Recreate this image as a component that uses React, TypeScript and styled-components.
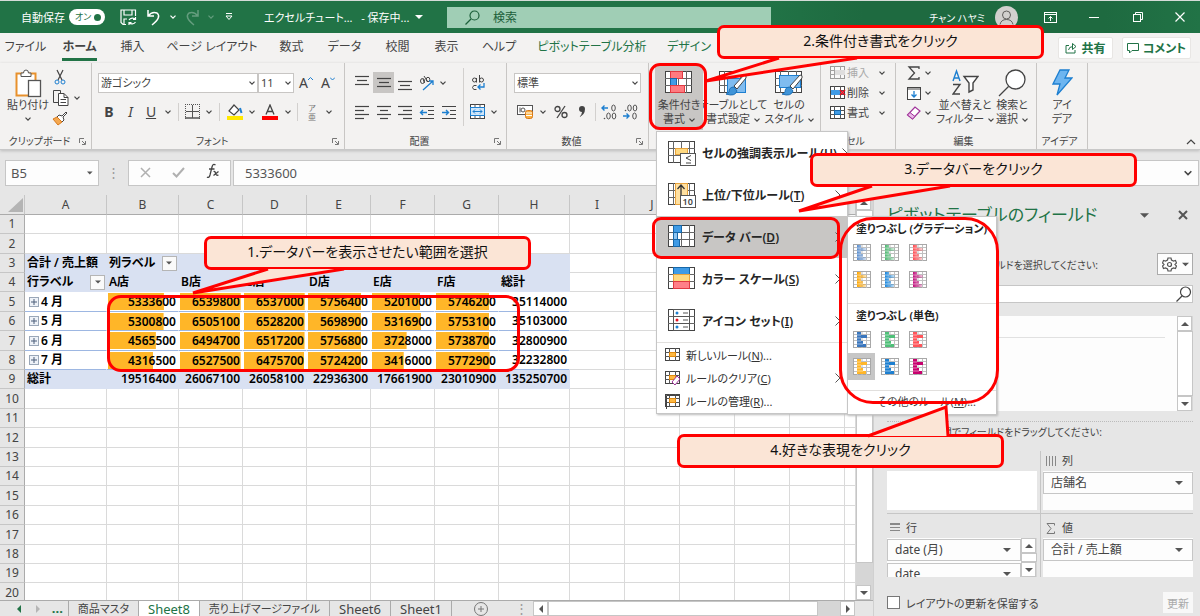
import React from 'react';
import styled, { createGlobalStyle, css } from 'styled-components';

const GlobalStyle = createGlobalStyle`
  * { box-sizing: border-box; }
  html, body { margin: 0; padding: 0; }
  body, button, input, select {
    font-family: "Noto Sans", "Noto Sans CJK JP", sans-serif;
    font-feature-settings: "palt";
    color: #444;
  }
  button { border: 0; padding: 0; background: none; }
`;

/* ---------- shared drawings ---------- */

type Dir = 'up' | 'down' | 'left' | 'right';

const Chevron = ({ size = 6, color = '#444' }: { size?: number; color?: string }) => (
  <svg width={size} height={size} viewBox="0 0 6 6" fill="none" stroke={color} strokeWidth="1.2">
    <path d="M.5 1.7 3 4.2 5.500 1.700" />
  </svg>
);

const Triangle = ({ dir = 'down', color = '#555', size = 8 }: { dir?: Dir; color?: string; size?: number }) => {
  const d = { up: 'M0 6 4 2 8 6Z', down: 'M0 2 4 6 8 2Z', left: 'M6 0 2 4 6 8Z', right: 'M2 0 6 4 2 8Z' }[dir];
  return (
    <svg width={size} height={size} viewBox="0 0 8 8">
      <path d={d} fill={color} />
    </svg>
  );
};

type CellFill = [number, number, number, number, string, string?];

/* Small worksheet drawing: 27x22 grid with coloured blocks */
const SheetIcon = ({ fills, children }: { fills: CellFill[]; children?: React.ReactNode }) => (
  <svg width="29" height="25" viewBox="0 0 29 25" fill="none">
    <rect x=".5" y=".5" width="26" height="21" fill="#fff" stroke="#444" />
    <path d="M5.500 0V22M13.500 0V22M21.500 0V22M0 7.500H27M0 14.500H27" stroke="#666" />
    {fills.map(([x, y, fw, fh, fill, stroke], i) => (
      <rect key={i} x={x} y={y} width={fw} height={fh} fill={fill} stroke={stroke} />
    ))}
    {children}
  </svg>
);

const MiniSheet = ({ children, faded }: { children?: React.ReactNode; faded?: boolean }) => (
  <svg width="16" height="16" viewBox="0 0 16 16" fill="none" opacity={faded ? 0.5 : 1}>
    <rect x=".5" y="1.500" width="14" height="12" fill="#fff" stroke="#444" />
    <path d="M4.500 1V14M10.500 1V14M0 5.500H15M0 9.500H15" stroke="#555" />
    {children}
  </svg>
);

const Brush = ({ x, y }: { x: number; y: number }) => (
  <g transform={`translate(${x} ${y})`}>
    <path d="M17 0 7 11 10 14 19 3Q20 0 17 0Z" fill="#fff" stroke="#444" />
    <path d="M7 12Q2 12 2 17Q1 19 -1 19Q8 22 10 16Z" fill="#3f94d8" stroke="#1d6fb5" />
  </g>
);

/* ---------- title bar ---------- */

const Window = styled.div`
  position: relative;
  display: flex;
  flex-direction: column;
  width: 100%;
  height: 100vh;
  overflow: hidden;
  background: #e6e6e6;
  border-top: 1px solid #d5dcd8;
`;

const TitleBar = styled.header`
  display: flex;
  align-items: center;
  flex: none;
  height: 32px;
  padding-left: 21px;
  background: linear-gradient(90deg, #217346 0 64%, #1e6a40 72% 92%, #217346);
  color: #fff;
  font-size: 12px;
`;

const AutoSave = styled.label`
  display: flex;
  align-items: center;
  gap: 4px;
  width: 97px;
  font-size: 11px;
  white-space: nowrap;
`;

const Toggle = styled.button`
  display: flex;
  align-items: center;
  justify-content: space-between;
  width: 36px;
  height: 16px;
  padding: 0 4px 0 6px;
  border-radius: 8px;
  background: #fff;
  color: #217346;
  font-size: 9px;
  line-height: 16px;
`;

const Dot = styled.span`
  width: 7px;
  height: 7px;
  border-radius: 50%;
  background: #217346;
`;

const TitleTool = styled.button<{ $w: number; $dim?: boolean }>`
  display: flex;
  align-items: center;
  justify-content: center;
  width: ${p => p.$w}px;
  height: 32px;
  opacity: ${p => (p.$dim ? 0.3 : 1)};
`;

const DocName = styled.div`
  display: flex;
  align-items: center;
  gap: 6px;
  width: 203px;
  padding-left: 20px;
  font-size: 11px;
  white-space: pre;
`;

const SearchBox = styled.label`
  display: flex;
  align-items: center;
  flex: 0 1 324px;
  height: 21px;
  padding-left: 18px;
  gap: 13px;
  background: #a0ceb5;
  svg { flex: none; }
  input {
    width: 100%;
    min-width: 0;
    border: 0;
    background: transparent;
    font-size: 12px;
    padding: 0;
    &::placeholder { color: #1c5f3a; opacity: 1; }
  }
`;

const User = styled.div`
  display: flex;
  align-items: center;
  gap: 10px;
  margin-left: auto;
  margin-right: 10px;
  font-size: 10px;
`;

/* ---------- tabs ---------- */

const TabRow = styled.nav`
  display: flex;
  align-items: center;
  flex: none;
  height: 30px;
  background: #f3f2f1;
  padding-right: 9px;
`;

const Tab = styled.button<{ $w: number; $on?: boolean; $green?: boolean }>`
  display: flex;
  justify-content: center;
  width: ${p => p.$w}px;
  font-size: 12px;
  line-height: 20px;
  white-space: nowrap;
  font-weight: ${p => (p.$on ? 700 : 400)};
  color: ${p => (p.$green ? '#217346' : '#444')};
  span {
    height: 24px;
    margin-top: 2px;
    border-bottom: 3px solid ${p => (p.$on ? '#217346' : 'transparent')};
  }
`;

const ShareButton = styled.button<{ $w: number }>`
  display: flex;
  align-items: center;
  justify-content: center;
  gap: 4px;
  width: ${p => p.$w}px;
  height: 22px;
  margin-left: 9px;
  border: 1px solid #e8e6e4;
  border-radius: 2px;
  background: #fff;
  color: #217346;
  font-size: 12px;
  font-weight: 700;
  white-space: nowrap;
`;

const Spacer = styled.div`
  flex: 1;
`;

/* ---------- ribbon ---------- */

const Ribbon = styled.section`
  position: relative;
  display: flex;
  flex: none;
  height: 87px;
  background: #f3f2f1;
  border-bottom: 1px solid #c8c8c8;
  box-shadow: 0 1px 3px #bbb;
  font-size: 11px;
`;

const Group = styled.div<{ $w: number }>`
  display: flex;
  flex-direction: column;
  flex: none;
  width: ${p => p.$w}px;
  border-right: 1px solid #c8c6c4;
`;

const GroupBody = styled.div<{ $pad?: number }>`
  display: flex;
  flex: 1;
  padding-left: ${p => p.$pad ?? 0}px;
`;

const GroupLabel = styled.div`
  display: flex;
  align-items: center;
  justify-content: center;
  height: 15px;
  font-size: 10px;
  line-height: 15px;
  white-space: nowrap;
  padding-right: 5px;
  span { flex: 1; text-align: center; }
`;

const Column = styled.div<{ $w?: number; $gap?: number; $top?: number }>`
  display: flex;
  flex-direction: column;
  width: ${p => (p.$w ? `${p.$w}px` : 'auto')};
  gap: ${p => p.$gap ?? 8}px;
  padding-top: ${p => p.$top ?? 9}px;
`;

const ToolRow = styled.div`
  display: flex;
  align-items: center;
  height: 21px;
`;

const Tool = styled.button<{ $w: number; $on?: boolean }>`
  display: flex;
  align-items: center;
  justify-content: center;
  flex: none;
  width: ${p => p.$w}px;
  height: 21px;
  font-size: 14px;
  line-height: 20px;
  background: ${p => (p.$on ? '#c8c6c4' : 'transparent')};
`;

const Ruby = styled.span`
  width: 9px;
  font-size: 8px;
  line-height: 9px;
  color: #777;
`;

const Divider = styled.span<{ $h?: number; $m?: number }>`
  flex: none;
  width: 1px;
  height: ${p => p.$h ?? 18}px;
  margin: 0 ${p => p.$m ?? 3}px;
  background: #d2d0ce;
`;

const Picker = styled.div<{ $w: number }>`
  display: grid;
  align-items: center;
  flex: none;
  width: ${p => p.$w}px;
  select {
    grid-area: 1 / 1;
    appearance: none;
    width: 100%;
    height: 20px;
    padding: 0 2px;
    border: 1px solid #c8c6c4;
    border-radius: 0;
    background: #fff;
    font-size: 11px;
    line-height: 18px;
  }
  svg {
    grid-area: 1 / 1;
    justify-self: end;
    margin-right: 3px;
    pointer-events: none;
  }
`;

const BigButton = styled.button<{ $w: number; $on?: boolean }>`
  display: flex;
  flex-direction: column;
  align-items: center;
  flex: none;
  width: ${p => p.$w}px;
  height: 64px;
  margin-top: 3px;
  padding-top: 3px;
  font-size: 11px;
  line-height: 14px;
  white-space: nowrap;
  background: ${p => (p.$on ? '#c8c6c4' : 'transparent')};
  > svg:first-child { flex: none; height: 29px; }
  > svg:last-child { margin-top: 4px; }
  span svg { margin-left: 4px; vertical-align: middle; }
`;

const SmallButton = styled.button<{ $faded?: boolean }>`
  display: flex;
  align-items: center;
  gap: 1px;
  height: 20px;
  font-size: 11px;
  line-height: 20px;
  white-space: nowrap;
  color: ${p => (p.$faded ? '#aaa' : '#444')};
  > span + svg { margin-left: 9px; }
`;

const MenuAnchor = styled.div`
  position: relative;
  z-index: 5;
  margin-left: 6px;
`;

/* ---------- menus ---------- */

const popup = css`
  background: #fff;
  border: 1px solid #c6c6c6;
  box-shadow: 1px 1px 2px #bbb;
`;

const Menu = styled.ul`
  ${popup}
  position: absolute;
  left: 1px;
  top: 68px;
  width: 192px;
  margin: 0;
  padding: 0 0 1px;
  list-style: none;
`;

const MenuItem = styled.li<{ $on?: boolean }>`
  position: relative;
  background: ${p => (p.$on ? '#c8c6c4' : 'transparent')};
  > button {
    display: flex;
    align-items: center;
    gap: 5px;
    width: 100%;
    height: 42px;
    padding: 0 6px 0 11px;
    font-size: 12px;
    font-weight: 600;
    color: #262626;
    white-space: nowrap;
    svg { flex: none; }
    svg:last-child { margin-left: auto; }
  }
`;

const SmallItem = styled.li`
  > button {
    display: flex;
    align-items: center;
    gap: 5px;
    width: 100%;
    height: 23px;
    padding: 0 6px 0 8px;
    font-size: 11px;
    color: #333;
    white-space: nowrap;
    svg { flex: none; }
    svg:nth-child(3) { margin-left: auto; }
  }
`;

const Rule = styled.hr`
  height: 1px;
  margin: 0;
  border: 0;
  background: #e1dfdd;
`;

const Submenu = styled.div`
  ${popup}
  position: absolute;
  left: 190px;
  top: 0;
  width: 150px;
  height: 199px;
`;

const SubTitle = styled.h3`
  margin: 0;
  padding: 2px 0 0 8px;
  font-size: 11px;
  font-weight: 600;
  line-height: 20px;
  color: #222;
  white-space: nowrap;
`;

const Swatches = styled.div`
  display: grid;
  grid-template-columns: repeat(3, 28px);
  grid-auto-rows: 27px;
  padding-bottom: 10px;
`;

const Swatch = styled.button<{ $on?: boolean }>`
  display: flex;
  align-items: center;
  justify-content: center;
  width: 27px;
  height: 27px;
  background: ${p => (p.$on ? '#c6c6c6' : 'transparent')};
`;

const MoreRules = styled.button`
  width: 100%;
  padding-left: 29px;
  font-size: 11px;
  line-height: 22px;
  text-align: left;
  white-space: nowrap;
`;

/* ---------- formula bar ---------- */

const FormulaBar = styled.div`
  display: flex;
  flex: none;
  height: 45px;
  padding: 10px 1px 9px 5px;
`;

const NameBox = styled.label`
  display: flex;
  align-items: center;
  width: 94px;
  padding: 0 5px;
  border: 1px solid #c6c6c6;
  background: #fdfdfd;
  input { width: 100%; min-width: 0; border: 0; padding: 0; background: none; font-size: 13px; color: #555; }
`;

const Grip = styled.span<{ $w?: number }>`
  width: ${p => p.$w ?? 29}px;
  color: #999;
  font-size: 13px;
  line-height: ${p => (p.$w ? 15 : 24)}px;
  text-align: center;
`;

const FormulaTools = styled.div`
  display: flex;
  align-items: center;
  justify-content: space-around;
  width: 103px;
  margin-right: 2px;
  border: 1px solid #c6c6c6;
  background: #fdfdfd;
`;

const FormulaInput = styled.label`
  display: flex;
  align-items: center;
  flex: 1;
  padding: 0 6px 0 11px;
  border: 1px solid #c6c6c6;
  background: #fdfdfd;
  input { flex: 1; min-width: 0; border: 0; padding: 0; background: none; font-size: 13px; color: #555; }
`;

/* ---------- worksheet ---------- */

const Main = styled.main`
  display: flex;
  flex: 1;
  min-height: 0;
`;

const SheetSide = styled.div`
  display: flex;
  flex-direction: column;
  flex: 1;
  min-width: 0;
  border-right: 1px solid #d0d0d0;
`;

const SheetBody = styled.div`
  display: flex;
  flex: 1;
  min-height: 0;
`;

const SheetViewport = styled.div`
  flex: 1;
  min-width: 0;
  overflow: hidden;
  background: #fff;
`;

const Grid = styled.table`
  table-layout: fixed;
  width: 100%;
  border-spacing: 0;
  font-size: 12px;
  color: #000;
  td, th { padding: 0; line-height: 18px; white-space: nowrap; overflow: hidden; }
  thead th {
    height: 20px;
    border-right: 1px solid #c6c6c6;
    border-bottom: 1px solid #ababab;
    background: #e6e6e6;
    color: #444;
    font-size: 12px;
    font-weight: 400;
    text-align: center;
  }
  thead svg { display: block; }
  tbody th {
    border-right: 1px solid #ababab;
    border-bottom: 1px solid #c6c6c6;
    background: #e6e6e6;
    color: #444;
    font-size: 12px;
    font-weight: 400;
    text-align: center;
  }
  tbody tr { height: 19px; }
  tbody tr:nth-child(5n), tbody tr:nth-child(5n + 2) { height: 20px; }
`;

const Cell = styled.td<{ $head?: boolean; $pivot?: boolean }>`
  border-right: 1px solid ${p => (p.$head ? '#d9e1f2' : p.$pivot ? '#fff' : '#dadada')};
  border-bottom: 1px solid ${p => (p.$head ? '#d9e1f2' : p.$pivot ? '#9db7e2' : '#dadada')};
  background: ${p => (p.$head ? '#d9e1f2' : '#fff')};
  font-weight: 600;
`;

const CellText = styled.div<{ $right?: boolean }>`
  display: flex;
  align-items: center;
  justify-content: ${p => (p.$right ? 'flex-end' : 'flex-start')};
  gap: 6px;
  height: 18px;
  padding: 0 ${p => (p.$right ? 2 : 1)}px 0 2px;
`;

const RowName = styled.div`
  display: flex;
  align-items: center;
  gap: 2px;
  height: 18px;
  padding-left: 4px;
`;

const BarCell = styled.div`
  height: 17px;
  margin: 0 0 0 1px;
  padding-right: 2px;
  line-height: 17px;
  text-align: right;
  background-image: linear-gradient(#ffb628, #ffb628);
  background-repeat: no-repeat;
`;

const FilterButton = styled.button<{ $end?: boolean }>`
  display: flex;
  align-items: center;
  justify-content: center;
  flex: none;
  width: 15px;
  height: 15px;
  margin-left: ${p => (p.$end ? 'auto' : '0')};
  border: 1px solid #b5b5b5;
  background: #fafafa;
`;

const VScroll = styled.div<{ $w: number }>`
  display: flex;
  flex-direction: column;
  flex: none;
  width: ${p => p.$w}px;
  background: #d6d6d6;
`;

const ScrollButton = styled.button`
  display: flex;
  align-items: center;
  justify-content: center;
  flex: none;
  width: 15px;
  height: 15px;
  border: 1px solid #c6c6c6;
  background: #fff;
`;

const Thumb = styled.div`
  flex: 1;
  background: #fff;
  border: 1px solid #c6c6c6;
`;

const Track = styled.div`
  flex: 0 0 22px;
`;

const TabBar = styled.div`
  display: flex;
  flex: none;
  height: 16px;
  border-top: 1px solid #ababab;
  font-size: 13px;
`;

const SheetNav = styled.div`
  display: flex;
  align-items: center;
  justify-content: space-around;
  width: 69px;
  padding-left: 10px;
  border-right: 1px solid #ababab;
  color: #217346;
  font-weight: 700;
  line-height: 15px;
`;

const SheetTab = styled.button<{ $w: number; $on?: boolean }>`
  flex: none;
  width: ${p => p.$w}px;
  border-right: 1px solid #ababab;
  background: ${p => (p.$on ? '#fff' : 'transparent')};
  color: ${p => (p.$on ? '#217346' : '#444')};
  font-size: 13px;
  line-height: 14px;
  white-space: nowrap;
  &:lang(ja) { font-size: 11px; }
`;

const AddSheet = styled.button`
  display: flex;
  align-items: center;
  justify-content: center;
  width: 58px;
  height: 15px;
`;

const HScroll = styled.div`
  display: flex;
  flex: 1;
  margin-right: 18px;
  background: #d6d6d6;
`;

/* ---------- field pane ---------- */

const Pane = styled.aside`
  display: flex;
  flex-direction: column;
  flex: none;
  width: 326px;
  padding: 0 7px 3px 13px;
  font-size: 11px;
`;

const PaneHead = styled.div`
  display: flex;
  align-items: center;
  height: 40px;
  h2 { flex: 1; margin: 0; font-size: 17px; font-weight: 400; line-height: 40px; color: #217346; white-space: nowrap; }
  button:last-child { margin: 0 5px 0 29px; }
`;

const PaneNote = styled.div`
  display: flex;
  align-items: center;
  justify-content: space-between;
  height: 22px;
  margin-top: 18px;
  font-size: 10px;
`;

const GearButton = styled.button`
  display: flex;
  align-items: center;
  justify-content: center;
  gap: 5px;
  width: 36px;
  height: 22px;
  border: 1px solid #ababab;
  background: #fdfdfd;
`;

const FieldSearch = styled.label`
  display: flex;
  align-items: center;
  height: 18px;
  margin-top: 10px;
  border: 1px solid #c6c6c6;
  background: #fff;
  input { flex: 1; min-width: 0; height: 14px; border: 0; background: none; padding: 0 4px; }
`;

const FieldList = styled.div`
  display: flex;
  flex: 1;
  min-height: 0;
  margin-top: 13px;
  background: #fdfdfd;
`;

const FieldRows = styled.div`
  flex: 1;
  hr { height: 1px; margin: 21px 12px 0 0; border: 0; background: #e1e1e1; }
`;

const AreaNote = styled.p`
  margin: 10px 0 8px;
  border-top: 1px dotted #bbb;
  font-size: 10px;
  line-height: 21px;
`;

const Areas = styled.div`
  display: grid;
  grid-template-columns: 1fr 1fr;
`;

const Area = styled.section<{ $right?: boolean; $top?: boolean }>`
  height: 63px;
  padding: ${p => (p.$top ? 0 : 4)}px ${p => (p.$right ? 0 : 3)}px 0 ${p => (p.$right ? 2 : 0)}px;
  border-left: ${p => (p.$right ? '1px solid #c6c6c6' : '0')};
  border-bottom: ${p => (p.$top ? '1px solid #c6c6c6' : '0')};
  h4 { display: flex; align-items: center; gap: 6px; height: 20px; margin: 0; padding-left: 3px; font-size: 11px; font-weight: 400; line-height: 20px; }
`;

const DropZone = styled.div`
  display: flex;
  height: 39px;
  overflow: hidden;
  background: #fff;
`;

const Chips = styled.div`
  display: flex;
  flex-direction: column;
  flex: 1;
  gap: 2px;
  padding-top: 1px;
  background: #fdfdfd;
`;

const Chip = styled.button`
  display: flex;
  align-items: center;
  justify-content: space-between;
  flex: none;
  height: 22px;
  padding: 0 9px 0 7px;
  border: 1px solid #c6c6c6;
  background: #fdfdfd;
  font-size: 12px;
  line-height: 20px;
`;

const PaneFoot = styled.div`
  display: flex;
  align-items: center;
  justify-content: space-between;
  height: 21px;
  margin-top: 15px;
  label { display: flex; align-items: center; gap: 6px; }
  input { appearance: none; width: 13px; height: 13px; margin: 0; border: 1px solid #777; background: #fff; }
  button { width: 30px; height: 21px; background: #f8f8f8; color: #aaa; font-size: 11px; }
`;

/* ---------- tutorial marks ---------- */

const Frame = styled.div<{ $x: number; $y: number; $w: number; $h: number; $r: number }>`
  position: absolute;
  z-index: 8;
  left: ${p => p.$x}px;
  top: ${p => p.$y}px;
  width: ${p => p.$w}px;
  height: ${p => p.$h}px;
  border: 3px solid #f00;
  border-radius: ${p => p.$r}px;
  pointer-events: none;
`;

const CalloutBox = styled.div<{ $x: number; $y: number }>`
  position: absolute;
  z-index: 9;
  left: ${p => p.$x}px;
  top: ${p => p.$y}px;
  width: 327px;
  height: 34px;
  border: 3px solid #f00;
  border-radius: 7px;
  background: #fbe5d6;
  color: #111;
  font-size: 14px;
  line-height: 26px;
  text-align: center;
  svg { position: absolute; left: -3px; top: -3px; overflow: visible; }
`;

/* tail: base point, tip, base point, measured from the corner of the box */
const Callout = ({ x, y, tail, children }: { x: number; y: number; tail: [number, number][]; children: React.ReactNode }) => {
  const pts = tail.map(p => p.join(',')).join(' ');
  return (
    <CalloutBox $x={x} $y={y}>
      <svg width="327" height="34">
        <polygon points={pts} fill="#fbe5d6" />
        <polyline points={pts} fill="none" stroke="#f00" strokeWidth="3" />
      </svg>
      {children}
    </CalloutBox>
  );
};

/* ---------- data ---------- */

const COLUMNS = 'ABCDEFGHIJKLM'.split('');
const WIDTHS = [82, 72, 64, 64, 64, 64, 64, 71];
const SALES: Record<number, [string, number[]]> = {
  5: ['4 月', [5333600, 6539800, 6537000, 5756400, 5201000, 5746200, 35114000]],
  6: ['5 月', [5300800, 6505100, 6528200, 5698900, 5316900, 5753100, 35103000]],
  7: ['6 月', [4565500, 6494700, 6517200, 5756800, 3728000, 5738700, 32800900]],
  8: ['7 月', [4316500, 6527500, 6475700, 5724200, 3416000, 5772900, 32232800]],
};
const TOTALS = [19516400, 26067100, 26058100, 22936300, 17661900, 23010900, 135250700];
const STORES = ['A店', 'B店', 'C店', 'D店', 'E店', 'F店', '総計'];
const MAX = 6539800;

const Expand = () => (
  <svg width="10" height="10" viewBox="0 0 10 10" fill="none">
    <rect x=".5" y=".5" width="9" height="9" fill="#eef2f8" stroke="#9aa7b8" />
    <path d="M2 5H8M5 2V8" stroke="#4a5d78" />
  </svg>
);

const cellContent = (row: number, col: number): React.ReactNode => {
  if (row === 3 && col === 0) return <CellText>合計 / 売上額</CellText>;
  if (row === 3 && col === 1)
    return <CellText>列ラベル<FilterButton aria-label="列の絞り込み"><Triangle size={6} /></FilterButton></CellText>;
  if (row === 4 && col === 0)
    return <CellText>行ラベル<FilterButton $end aria-label="行の絞り込み"><Triangle size={6} /></FilterButton></CellText>;
  if (row === 4 && col > 0) return <CellText>{STORES[col - 1]}</CellText>;
  if (row === 9) return col === 0 ? <CellText>総計</CellText> : <CellText $right>{TOTALS[col - 1]}</CellText>;
  const sales = SALES[row];
  if (!sales) return null;
  if (col === 0) return <RowName><Expand />{sales[0]}</RowName>;
  const value = sales[1][col - 1];
  if (col === 7) return <CellText $right>{value}</CellText>;
  return <BarCell style={{ backgroundSize: `${(value / MAX) * 98}% 100%` }}>{value}</BarCell>;
};

const Worksheet = () => (
  <Grid>
    <colgroup>
      <col style={{ width: 25 }} />
      {COLUMNS.map((c, i) => <col key={c} style={{ width: WIDTHS[i] ?? 55 }} />)}
      <col />
    </colgroup>
    <thead>
      <tr>
        <th aria-label="すべて選択">
          <svg width="25" height="18" viewBox="0 0 25 18"><path d="M23 2V16H8Z" fill="#b4b4b4" /></svg>
        </th>
        {COLUMNS.map(c => <th key={c}>{c}</th>)}
        <th />
      </tr>
    </thead>
    <tbody>
      {Array.from({ length: 20 }, (_, i) => i + 1).map(row => (
        <tr key={row}>
          <th>{row}</th>
          {COLUMNS.map((c, col) => (
            <Cell
              key={c}
              $head={col < 8 && (row === 3 || row === 4 || row === 9)}
              $pivot={col < 8 && row >= 5 && row <= 8}
            >
              {col < 8 ? cellContent(row, col) : null}
            </Cell>
          ))}
          <Cell />
        </tr>
      ))}
    </tbody>
  </Grid>
);

/* ---------- ribbon icons ---------- */

const Lines = ({ rows, top = 4 }: { rows: [number, number][]; top?: number }) => (
  <svg width="16" height="16" viewBox="0 0 16 16" stroke="#444" strokeWidth="1.200">
    {rows.map(([a, b], i) => <path key={i} d={`M${a} ${top + i * 4 - 1.5}H${b}`} />)}
  </svg>
);

const Indent = ({ out }: { out?: boolean }) => (
  <svg width="16" height="16" viewBox="0 0 16 16" fill="none" stroke="#444" strokeWidth="1.200">
    <path d="M1 2.500H15M9 6.500H15M9 10.500H15M1 14.500H15" />
    <path stroke="#1d7fd0" strokeWidth="1.400" d={out ? 'M8 8.500H1.500M4 6 1.500 8.500 4 11' : 'M1 8.500H7.500M5 6 7.500 8.500 5 11'} />
  </svg>
);

const DialogMark = () => (
  <svg width="7" height="7" viewBox="0 0 7 7" fill="none" stroke="#777">
    <path d="M.5 5V.5H5M3 3 6 6M6.500 3V6.500H3" />
  </svg>
);

const Decimal = ({ more }: { more?: boolean }) => (
  <svg width="17" height="16" viewBox="0 0 17 16" fill="none">
    <path d={more ? 'M7 4H1M3.500 1.500 1 4 3.500 6.500' : 'M1 12H7M4.500 9.500 7 12 4.500 14.500'} stroke="#1d7fd0" strokeWidth="1.400" />
    <ellipse cx="12.500" cy={more ? 4 : 12} rx="1.800" ry="3" stroke="#555" />
    {[7.5, 13].map(cx => <ellipse key={cx} cx={cx} cy={more ? 12 : 4} rx="1.800" ry="3" stroke="#555" />)}
    <circle cx="3.500" cy={more ? 14.500 : 6.500} r=".8" fill="#555" />
  </svg>
);

const GRAD = ['#5b8fd0', '#4fb873', '#ff4d52', '#ffa600', '#1a86dc', '#c2107c'];
const SOLID = ['#3a76bd', '#4fbf78', '#ff555a', '#ffb628', '#1d7fd0', '#c8006e'];

const BarSwatch = ({ color, solid }: { color: string; solid?: boolean }) => (
  <svg width="18" height="18" viewBox="0 0 18 18" fill="none">
    <defs>
      <linearGradient id={`g${color.slice(1)}`}>
        <stop offset="0" stopColor={color} />
        <stop offset="1" stopColor={color} stopOpacity=".2" />
      </linearGradient>
    </defs>
    <rect x=".5" y=".5" width="17" height="16" fill="#fff" stroke="#a8a8a8" />
    <path d="M4.500 1V17M9 1V17M13.500 1V17M1 3.500H17M1 6.500H17M1 9.500H17M1 13.500H17" stroke="#c0c0c0" />
    <path
      d="M4 1H8V4H14V7H8V10H10V13H13V16H4Z"
      fill={solid ? color : `url(#g${color.slice(1)})`}
    />
    <path d="M4 4H8M4 7H8M4 10H8M4 13H10" stroke="#fff" strokeWidth=".5" />
  </svg>
);

const Arrow = () => (
  <svg width="6" height="10" viewBox="0 0 6 10" fill="none" stroke="#555">
    <path d="M.5 .5 5 5 .5 9.500" />
  </svg>
);

const ConditionalMenu = () => (
  <Menu>
    <MenuItem>
      <button>
        <SheetIcon fills={[[7.5, 7.5, 12, 6, '#ffd980', '#e8a33d']]}>
          <rect x="12.500" y="12.500" width="15" height="12" fill="#fff" stroke="#555" />
          <path d="M23 14.500 18 17 23 19.500M18 22H23" stroke="#444" />
        </SheetIcon>
        <span>セルの強調表示ルール(<u>H</u>)</span><Arrow />
      </button>
    </MenuItem>
    <MenuItem>
      <button>
        <SheetIcon fills={[[7.5, 0.5, 12, 21, '#ffe0a0', '#e8a33d']]}>
          <path d="M13 12V2M9.500 6 13 2 16.500 6" stroke="#333" strokeWidth="1.300" />
          <rect x="12.500" y="12.500" width="15" height="12" fill="#fff" stroke="#555" />
          <text x="14.500" y="22" fontSize="9" fill="#444">10</text>
        </SheetIcon>
        <span>上位/下位ルール(<u>T</u>)</span><Arrow />
      </button>
    </MenuItem>
    <MenuItem $on>
      <button>
        <SheetIcon fills={[[5.5, 0.5, 8, 7, '#3f9be6', '#1667a8'], [5.5, 7.5, 4, 7, '#8cc4f2', '#1667a8'], [5.5, 14.5, 6, 7, '#3f9be6', '#1667a8']]} />
        <span>データ バー(<u>D</u>)</span><Arrow />
      </button>
      <Submenu>
        <SubTitle>塗りつぶし (グラデーション)</SubTitle>
        <Swatches>
          {GRAD.map(c => <Swatch key={c} aria-label="グラデーション"><BarSwatch color={c} /></Swatch>)}
        </Swatches>
        <Rule />
        <SubTitle>塗りつぶし (単色)</SubTitle>
        <Swatches>
          {SOLID.map((c, i) => <Swatch key={c} $on={i === 3} aria-label="単色"><BarSwatch color={c} solid /></Swatch>)}
        </Swatches>
        <Rule />
        <MoreRules>その他のルール(<u>M</u>)...</MoreRules>
      </Submenu>
    </MenuItem>
    <MenuItem>
      <button>
        <SheetIcon fills={[[5.5, 0.5, 16, 7, '#3f9be6', '#1667a8'], [5.5, 7.5, 16, 7, '#ffd980', '#e8a33d'], [5.5, 14.5, 16, 7, '#ff8088', '#e03a42']]} />
        <span>カラー スケール(<u>S</u>)</span><Arrow />
      </button>
    </MenuItem>
    <MenuItem>
      <button>
        <SheetIcon fills={[[5.5, 0.5, 16, 7, '#fff', '#555'], [5.5, 7.5, 16, 7, '#fff', '#555'], [5.5, 14.5, 16, 7, '#fff', '#555']]}>
          <path d="M15 4H20M15 11H20M15 18H20" stroke="#555" />
          <circle cx="9" cy="4" r="1.500" fill="#1d7fd0" />
          <circle cx="9" cy="11" r="1.500" fill="#e81123" />
          <circle cx="9" cy="18" r="1.500" fill="#1d7fd0" />
        </SheetIcon>
        <span>アイコン セット(<u>I</u>)</span><Arrow />
      </button>
    </MenuItem>
    <Rule />
    <SmallItem>
      <button>
        <MiniSheet><rect x="4.500" y="5.500" width="6" height="4" fill="#ffb840" stroke="#e08a10" /></MiniSheet>
        <span>新しいルール(<u>N</u>)...</span>
      </button>
    </SmallItem>
    <SmallItem>
      <button>
        <MiniSheet>
          <rect x="4.500" y="5.500" width="6" height="4" fill="#ffb840" stroke="#e08a10" />
          <path d="M7 12 12 6 15 9 10 15Z" fill="#fff" stroke="#a0329a" />
        </MiniSheet>
        <span>ルールのクリア(<u>C</u>)</span><Arrow />
      </button>
    </SmallItem>
    <SmallItem>
      <button>
        <MiniSheet>
          <rect x="4.500" y="5.500" width="6" height="4" fill="#ffb840" stroke="#e08a10" />
          <path d="M1.500 16V2.500H15" stroke="#444" />
        </MiniSheet>
        <span>ルールの管理(<u>R</u>)...</span>
      </button>
    </SmallItem>
  </Menu>
);

const RibbonView = () => (
  <Ribbon>
    <Group $w={92}>
      <GroupBody $pad={5}>
        <BigButton $w={46}>
          <svg width="27" height="29" viewBox="0 0 27 29" fill="none">
            <rect x="1.500" y="4.500" width="19" height="22" fill="#fff" stroke="#e8912d" strokeWidth="2" />
            <path d="M6 7.500V4H8.500Q8.500 1 11 1Q13.500 1 13.500 4H16V7.500Z" fill="#fff" stroke="#555" />
            <rect x="13.500" y="11.500" width="12" height="16" fill="#fff" stroke="#555" strokeWidth="1.300" />
          </svg>
          <span>貼り付け</span>
          <Chevron />
        </BigButton>
        <Column $w={34} $gap={0} $top={3}>
          <Tool $w={18} aria-label="切り取り">
            <svg width="12" height="16" viewBox="0 0 12 16" fill="none">
              <path d="M3 1 8 11M9 1 4 11" stroke="#444" strokeWidth="1.200" />
              <circle cx="3" cy="13" r="2" stroke="#1d7fd0" /><circle cx="9" cy="13" r="2" stroke="#1d7fd0" />
            </svg>
          </Tool>
          <ToolRow>
            <Tool $w={20} aria-label="コピー">
              <svg width="16" height="16" viewBox="0 0 16 16" fill="none" stroke="#444">
                <path d="M5 12.500H.5V.5H7.500V3" /><path d="M5.500 3.500H11L15 7.500V15.500H5.500Z" fill="#fff" /><path d="M7.500 9.500H13M7.500 12.500H13M11 3.500V7.500H15" />
              </svg>
            </Tool>
            <Tool $w={12} aria-label="コピーのオプション"><Chevron /></Tool>
          </ToolRow>
          <Tool $w={18} aria-label="書式のコピー">
            <svg width="16" height="15" viewBox="0 0 16 15" fill="none">
              <path d="M14 1 10 5 7 4 5 6 10 11 12 9 11 6 15 2Z" fill="#fff" stroke="#444" />
              <path d="M5 6 1 8 6 14 10 11Z" fill="#f4a850" stroke="#d9791a" />
            </svg>
          </Tool>
        </Column>
      </GroupBody>
      <GroupLabel><span>クリップボード</span><DialogMark /></GroupLabel>
    </Group>

    <Group $w={253}>
      <GroupBody $pad={6}>
        <Column>
          <ToolRow>
            <Picker $w={160}>
              <select aria-label="フォント"><option>游ゴシック</option></select><Chevron />
            </Picker>
            <Picker $w={36}>
              <select aria-label="サイズ"><option>11</option></select><Chevron />
            </Picker>
            <Tool $w={24}>A<svg width="5" height="14" viewBox="0 0 5 14" fill="none"><path d="M0 4 2.500 1.500 5 4" stroke="#1d7fd0" /></svg></Tool>
            <Tool $w={20}>A<svg width="5" height="14" viewBox="0 0 5 14" fill="none"><path d="M0 1.500 2.500 4 5 1.500" stroke="#1d7fd0" /></svg></Tool>
          </ToolRow>
          <ToolRow>
            <Tool $w={22}><b>B</b></Tool>
            <Tool $w={21}><i>I</i></Tool>
            <Tool $w={20}><u>U</u></Tool>
            <Tool $w={14} aria-label="下線"><Chevron /></Tool>
            <Divider />
            <Tool $w={20} aria-label="罫線">
              <svg width="15" height="15" viewBox="0 0 15 15" fill="none" stroke="#555">
                <path d="M.5 0V15M14.500 0V15M0 .5H15" strokeDasharray="1 1" /><path d="M7.500 1V14M1 7.500H14" /><path d="M0 14H15" strokeWidth="1.500" />
              </svg>
            </Tool>
            <Tool $w={14} aria-label="罫線の種類"><Chevron /></Tool>
            <Divider />
            <Tool $w={23} aria-label="塗りつぶしの色">
              <svg width="16" height="16" viewBox="0 0 16 16" fill="none">
                <path d="M7 1 12 6 7 11 2 7Z" fill="#fff" stroke="#444" strokeWidth="1.200" /><path d="M13 4 14.500 9" stroke="#1d7fd0" strokeWidth="2" />
                <rect y="12" width="16" height="4" fill="#ffe800" />
              </svg>
            </Tool>
            <Tool $w={12} aria-label="色を選ぶ"><Chevron /></Tool>
            <Tool $w={24} aria-label="フォントの色">
              <svg width="16" height="16" viewBox="0 0 16 16" fill="none">
                <path d="M4 10.500 8 1 12 10.500M5.500 7.500H10.500" stroke="#444" strokeWidth="1.300" /><rect y="12" width="16" height="4" fill="#f00" />
              </svg>
            </Tool>
            <Tool $w={12} aria-label="文字色を選ぶ"><Chevron /></Tool>
            <Divider />
            <Tool $w={22}><Ruby>ア亜</Ruby></Tool>
            <Tool $w={12} aria-label="ふりがなの表示"><Chevron /></Tool>
          </ToolRow>
        </Column>
      </GroupBody>
      <GroupLabel><span>フォント</span><DialogMark /></GroupLabel>
    </Group>

    <Group $w={162}>
      <GroupBody $pad={6}>
        <Column $w={110}>
          <ToolRow>
            <Tool $w={22} aria-label="上揃え"><Lines rows={[[1, 15], [3, 13], [1, 15]]} top={3} /></Tool>
            <Tool $w={21} $on aria-label="上下中央揃え"><Lines rows={[[1, 15], [3, 13], [1, 15]]} top={5} /></Tool>
            <Tool $w={22} aria-label="下揃え"><Lines rows={[[1, 15], [3, 13], [1, 15]]} top={8} /></Tool>
            <Tool $w={22} aria-label="方向">
              <svg width="16" height="16" viewBox="0 0 16 16" fill="none">
                <ellipse cx="3.500" cy="6" rx="2" ry="2.500" stroke="#444" /><path d="M5.500 8 4 4" stroke="#444" />
                <path d="M5 1 9 7" stroke="#444" /><ellipse cx="9" cy="4.500" rx="1.800" ry="2.200" stroke="#444" />
                <path d="M4 15 14 6M10 6H14V10" stroke="#1d7fd0" strokeWidth="1.300" />
              </svg>
            </Tool>
            <Tool $w={10} aria-label="方向を選ぶ"><Chevron /></Tool>
          </ToolRow>
          <ToolRow>
            <Tool $w={22} aria-label="左揃え"><Lines rows={[[1, 15], [1, 10], [1, 15], [1, 10]]} /></Tool>
            <Tool $w={21} aria-label="中央揃え"><Lines rows={[[1, 15], [4, 12], [1, 15], [4, 12]]} /></Tool>
            <Tool $w={22} aria-label="右揃え"><Lines rows={[[1, 15], [6, 15], [1, 15], [6, 15]]} /></Tool>
            <Tool $w={22} aria-label="インデント解除"><Indent out /></Tool>
            <Tool $w={22} aria-label="インデント"><Indent /></Tool>
          </ToolRow>
        </Column>
        <Column $top={5}><Divider $h={58} $m={2} /></Column>
        <Column>
          <Tool $w={24} aria-label="折り返し">
            <svg width="14" height="16" viewBox="0 0 14 16" fill="none" stroke="#444">
              <circle cx="3.500" cy="5" r="2" /><path d="M5.500 3V7.500M8.500 0V7.500" /><circle cx="10.500" cy="5" r="2" />
              <path d="M5.500 10.500Q2 9.500 1.500 12.500Q2 15.500 5.500 14.500" /><path d="M13 8V12H7.500M9.500 9.500 7 12 9.500 14.500" stroke="#1d7fd0" strokeWidth="1.300" />
            </svg>
          </Tool>
          <ToolRow>
            <Tool $w={22} aria-label="セルを結合">
              <svg width="15" height="15" viewBox="0 0 15 15" fill="none">
                <rect x=".5" y=".5" width="14" height="14" fill="#fff" stroke="#444" /><path d="M5 0V15M10 0V15" stroke="#555" />
                <rect x=".5" y="3.500" width="14" height="8" fill="#cfe6fa" stroke="#1d7fd0" /><path d="M3 7.500H12M5 5.500 3 7.500 5 9.500M10 5.500 12 7.500 10 9.500" stroke="#1d7fd0" />
              </svg>
            </Tool>
            <Tool $w={12} aria-label="結合の種類"><Chevron /></Tool>
          </ToolRow>
        </Column>
      </GroupBody>
      <GroupLabel><span>配置</span><DialogMark /></GroupLabel>
    </Group>

    <Group $w={142}>
      <GroupBody $pad={7}>
        <Column>
          <ToolRow>
            <Picker $w={127}>
              <select aria-label="表示形式"><option>標準</option></select><Chevron />
            </Picker>
          </ToolRow>
          <ToolRow>
            <Tool $w={22} aria-label="通貨">
              <svg width="17" height="15" viewBox="0 0 17 15" fill="none">
                <rect x=".5" y="1.500" width="15" height="9" fill="#fff" stroke="#555" /><circle cx="6" cy="6" r="2" stroke="#555" /><path d="M3 3.500V8.500" stroke="#555" />
                <rect x="8.500" y="6.500" width="7" height="8" rx="2" fill="#fbb040" stroke="#d9791a" /><path d="M9 9H15M9 11.500H15" stroke="#fff" />
              </svg>
            </Tool>
            <Tool $w={14} aria-label="通貨を選ぶ"><Chevron /></Tool>
            <Tool $w={22} aria-label="パーセント">
              <svg width="14" height="14" viewBox="0 0 14 14" fill="none" stroke="#444" strokeWidth="1.300"><circle cx="3.500" cy="4" r="2.500" /><circle cx="10.500" cy="10" r="2.500" /><path d="M11 1 3 13" /></svg>
            </Tool>
            <Tool $w={20} aria-label="桁区切り">
              <svg width="8" height="13" viewBox="0 0 8 13"><path d="M4 1A3 3 0 1 0 4 7Q4 10 1 12Q7 10 7 4Q7 1 4 1Z" fill="#444" /></svg>
            </Tool>
            <Divider />
            <Tool $w={21} aria-label="小数点以下を増やす"><Decimal more /></Tool>
            <Tool $w={21} aria-label="小数点以下を減らす"><Decimal /></Tool>
          </ToolRow>
        </Column>
      </GroupBody>
      <GroupLabel><span>数値</span><DialogMark /></GroupLabel>
    </Group>

    <Group $w={172}>
      <GroupBody>
        <MenuAnchor>
          <BigButton $w={48} $on>
            <SheetIcon fills={[[5.5, 0.5, 12, 7, '#ff7a80', '#e03a42'], [5.5, 7.5, 6, 7, '#3f9be6', '#1667a8'], [5.5, 14.5, 14, 7, '#ff7a80', '#e03a42']]} />
            <span>条件付き</span><span>書式<Chevron /></span>
          </BigButton>
          <ConditionalMenu />
        </MenuAnchor>
        <BigButton $w={60}>
          <SheetIcon fills={[[8.5, 7.5, 18, 14, '#7fbcf0', '#1d7fd0']]}><Brush x={8} y={4} /></SheetIcon>
          <span>テーブルとして</span><span>書式設定<Chevron /></span>
        </BigButton>
        <BigButton $w={52}>
          <SheetIcon fills={[[4.5, 4.5, 21, 12, '#7fbcf0', '#1d7fd0']]}><Brush x={8} y={4} /></SheetIcon>
          <span>セルの</span><span>スタイル<Chevron /></span>
        </BigButton>
      </GroupBody>
      <GroupLabel />
    </Group>

    <Group $w={75}>
      <GroupBody $pad={9}>
        <Column $gap={0} $top={0}>
          <SmallButton $faded><MiniSheet faded><rect x="5" y="5" width="10" height="5" fill="#ccc" /></MiniSheet><span>挿入</span><Chevron /></SmallButton>
          <SmallButton>
            <MiniSheet><rect x="1" y="5" width="9" height="5" fill="#3f9be6" /><path d="M10 5 15 10M15 5 10 10" stroke="#e81123" strokeWidth="1.600" /></MiniSheet>
            <span>削除</span><Chevron />
          </SmallButton>
          <SmallButton><MiniSheet><rect x="4.500" y="5.500" width="6" height="4" fill="#3f9be6" stroke="#1667a8" /></MiniSheet><span>書式</span><Chevron /></SmallButton>
        </Column>
      </GroupBody>
      <GroupLabel><span>セル</span></GroupLabel>
    </Group>

    <Group $w={141}>
      <GroupBody $pad={9}>
        <Column $w={34} $gap={0} $top={0}>
          <SmallButton aria-label="合計">
            <svg width="19" height="16" viewBox="0 0 19 16" fill="none"><path d="M14 4V2H4L9.500 8 4 14H14V12" stroke="#444" strokeWidth="1.300" /></svg><Chevron />
          </SmallButton>
          <SmallButton aria-label="フィル">
            <svg width="19" height="16" viewBox="0 0 19 16" fill="none"><rect x="2.500" y="2.500" width="13" height="12" fill="#fff" stroke="#444" /><path d="M2 4H16" stroke="#444" /><path d="M9 6V12M6.500 9.500 9 12 11.500 9.500" stroke="#1d7fd0" strokeWidth="1.300" /></svg><Chevron />
          </SmallButton>
          <SmallButton aria-label="クリア">
            <svg width="19" height="16" viewBox="0 0 19 16" fill="none"><path d="M2.500 10 10 2 15 6 7.500 14Z" fill="#fff" stroke="#a0329a" strokeWidth="1.200" /><path d="M2.500 10 5 7.500 10 11.500 7.500 14Z" fill="#e9b8e6" stroke="#a0329a" /></svg><Chevron />
          </SmallButton>
        </Column>
        <BigButton $w={52}>
          <svg width="27" height="29" viewBox="0 0 27 29" fill="none" strokeWidth="1.400">
            <path d="M1 12 4.500 2 8 12M2.200 9H6.800" stroke="#1d7fd0" /><path d="M1 15.500H8L1 25H8" stroke="#444" />
            <path d="M12 7.500H26L21 14V21L17 23V14Z" fill="#fff" stroke="#444" />
          </svg>
          <span>並べ替えと</span><span>フィルター<Chevron /></span>
        </BigButton>
        <BigButton $w={42}>
          <svg width="28" height="29" viewBox="0 0 28 29" fill="none" stroke="#444" strokeWidth="1.300">
            <circle cx="17.500" cy="10.500" r="9.500" fill="#fff" /><path d="M10.500 17.500 1 27" />
          </svg>
          <span>検索と</span><span>選択<Chevron /></span>
        </BigButton>
      </GroupBody>
      <GroupLabel><span>編集</span></GroupLabel>
    </Group>

    <Group $w={51}>
      <GroupBody>
        <BigButton $w={50}>
          <svg width="21" height="29" viewBox="0 0 21 29"><path d="M8 1H17L13 9H20L5 26 8 15H1Z" fill="#6db5f0" stroke="#1d7fd0" strokeWidth="1.300" /></svg>
          <span>アイ</span><span>デア</span>
        </BigButton>
      </GroupBody>
      <GroupLabel><span>アイデア</span></GroupLabel>
    </Group>

    <Spacer />
    <Column $w={14} $top={74}>
      <svg width="10" height="10" viewBox="0 0 10 10" fill="none" stroke="#444" strokeWidth="1.200"><path d="M1 7 5 3 9 7" /></svg>
    </Column>
  </Ribbon>
);

const Title = () => (
  <TitleBar>
    <AutoSave>自動保存<Toggle aria-pressed="true">オン<Dot /></Toggle></AutoSave>
    <TitleTool $w={20} aria-label="保存">
      <svg width="17" height="17" viewBox="0 0 17 17" fill="none" stroke="#fff" strokeWidth="1.200">
        <path d="M6 15.500H3L1 13.500V1H15.500V7M4 1V6H12V1M4 15V10H7" /><path d="M9 11A4 4 0 0 1 15.500 10.500M15.500 8V10.500H13M15.500 13A4 4 0 0 1 9 13.500M9 16V13.500H11.500" />
      </svg>
    </TitleTool>
    <TitleTool $w={32} aria-label="元に戻す">
      <svg width="16" height="17" viewBox="0 0 16 17" fill="none" stroke="#fff" strokeWidth="1.500"><path d="M2 1V7H8M2 7Q6 2 11 4Q16 8 6 16" /></svg>
    </TitleTool>
    <TitleTool $w={6} aria-label="元に戻す履歴"><Chevron color="#fff" /></TitleTool>
    <TitleTool $w={32} $dim aria-label="やり直し">
      <svg width="16" height="17" viewBox="0 0 16 17" fill="none" stroke="#fff" strokeWidth="1.500"><path d="M14 1V7H8M14 7Q10 2 5 4Q0 8 10 16" /></svg>
    </TitleTool>
    <TitleTool $w={6} $dim aria-label="やり直し履歴"><Chevron color="#fff" /></TitleTool>
    <TitleTool $w={30} aria-label="クイック アクセス">
      <svg width="8" height="8" viewBox="0 0 8 8" fill="none" stroke="#fff"><path d="M1 .5H7M1 3 4 6.500 7 3Z" /></svg>
    </TitleTool>
    <DocName>エクセルチュート…   - 保存中...<Triangle color="#fff" /></DocName>
    <SearchBox>
      <svg width="15" height="15" viewBox="0 0 15 15" fill="none" stroke="#1c5f3a" strokeWidth="1.200"><circle cx="9.500" cy="5.500" r="4.500" /><path d="M6 9 .5 14.500" /></svg>
      <input placeholder="検索" aria-label="検索" />
    </SearchBox>
    <User>
      チャン ハヤミ
      <svg width="23" height="23" viewBox="0 0 23 23" fill="none"><circle cx="11.500" cy="11.500" r="11.500" fill="#d2d0ce" /><circle cx="11.500" cy="9" r="4" stroke="#605e5c" /><path d="M5 18.500Q6 13.500 11.500 13.500Q17 13.500 18 18.500" stroke="#605e5c" /></svg>
    </User>
    <TitleTool $w={44} aria-label="リボンの表示オプション">
      <svg width="13" height="11" viewBox="0 0 13 11" fill="none" stroke="#fff"><rect x=".5" y=".5" width="12" height="10" /><path d="M1 2.500H12M6.500 9V4.500M4.500 6.500 6.500 4.500 8.500 6.500" /></svg>
    </TitleTool>
    <TitleTool $w={44} aria-label="最小化"><svg width="10" height="2"><rect width="10" height="1" y="1" fill="#fff" /></svg></TitleTool>
    <TitleTool $w={43} aria-label="元のサイズに戻す">
      <svg width="10" height="10" viewBox="0 0 10 10" fill="none" stroke="#fff"><rect x=".5" y="2.500" width="7" height="7" /><path d="M2.500 2.500V.5H9.500V7.500H7.500" /></svg>
    </TitleTool>
    <TitleTool $w={41} aria-label="閉じる"><svg width="10" height="10" viewBox="0 0 10 10" stroke="#fff" strokeWidth="1.200"><path d="M.5 .5 9.500 9.500M9.500 .5 .5 9.500" /></svg></TitleTool>
  </TitleBar>
);

const TABS: { t: string; w: number; on?: boolean; green?: boolean }[] = [
  { t: 'ファイル', w: 51 },
  { t: 'ホーム', w: 57, on: true },
  { t: '挿入', w: 49 },
  { t: 'ページ レイアウト', w: 110 },
  { t: '数式', w: 49 },
  { t: 'データ', w: 57 },
  { t: '校閲', w: 49 },
  { t: '表示', w: 49 },
  { t: 'ヘルプ', w: 56 },
  { t: 'ピボットテーブル分析', w: 130, green: true },
  { t: 'デザイン', w: 64, green: true },
];

const GearIcon = () => (
  <svg width="15" height="15" viewBox="0 0 15 15" fill="none" stroke="#555" strokeWidth="1.200">
    <path d="M6 1H9L9.500 3 11.500 4 13.500 3.500 14.500 6 13 7.500 14.500 9 13.500 11.500 11.500 11 9.500 12 9 14H6L5.500 12 3.500 11 1.500 11.500 .5 9 2 7.500 .5 6 1.500 3.500 3.500 4 5.500 3Z" />
    <circle cx="7.500" cy="7.500" r="2" />
  </svg>
);

const FieldPane = () => (
  <Pane>
    <PaneHead>
      <h2>ピボットテーブルのフィールド</h2>
      <button aria-label="作業ウィンドウのオプション"><Triangle size={9} /></button>
      <button aria-label="作業ウィンドウを閉じる">
        <svg width="10" height="10" viewBox="0 0 10 10" stroke="#555" strokeWidth="2"><path d="M1 1 9 9M9 1 1 9" /></svg>
      </button>
    </PaneHead>
    <PaneNote>
      レポートに追加するフィールドを選択してください:
      <GearButton aria-label="ツール"><GearIcon /><Triangle size={7} /></GearButton>
    </PaneNote>
    <FieldSearch>
      <input aria-label="フィールドの検索" />
      <svg width="16" height="16" viewBox="0 0 16 16" fill="none" stroke="#444" strokeWidth="1.200"><circle cx="9.500" cy="6" r="5" /><path d="M6 10 .5 15.500" /></svg>
    </FieldSearch>
    <FieldList>
      <FieldRows><hr /></FieldRows>
      <VScroll $w={16}>
        <ScrollButton aria-label="上へ"><Triangle dir="up" /></ScrollButton>
        <Thumb />
        <ScrollButton aria-label="下へ"><Triangle /></ScrollButton>
      </VScroll>
    </FieldList>
    <AreaNote>次のボックス間でフィールドをドラッグしてください:</AreaNote>
    <Areas>
      <Area $top>
        <h4>フィルター</h4>
        <DropZone />
      </Area>
      <Area $top $right>
        <h4>
          <svg width="10" height="10" stroke="#888"><path d="M.5 0V10M3.500 0V10M6.500 0V10M9.500 0V10" /></svg>列
        </h4>
        <DropZone><Chips><Chip>店舗名<Triangle /></Chip></Chips></DropZone>
      </Area>
      <Area>
        <h4>
          <svg width="10" height="10" stroke="#888"><path d="M0 1.500H10M0 4.500H10M0 7.500H10" /><path d="M0 .5H10" strokeWidth="2" /></svg>行
        </h4>
        <DropZone>
          <Chips><Chip>date (月)<Triangle /></Chip><Chip>date<Triangle /></Chip></Chips>
          <VScroll $w={16}>
            <ScrollButton aria-label="上へ"><Triangle dir="up" /></ScrollButton>
            <Thumb />
            <ScrollButton aria-label="下へ"><Triangle /></ScrollButton>
          </VScroll>
        </DropZone>
      </Area>
      <Area $right>
        <h4>
          <svg width="10" height="11" viewBox="0 0 10 11" fill="none" stroke="#777"><path d="M8.500 2.500V.5H1L5 5.500 1 10.500H8.500V8.500" /></svg>値
        </h4>
        <DropZone><Chips><Chip>合計 / 売上額<Triangle /></Chip></Chips></DropZone>
      </Area>
    </Areas>
    <PaneFoot>
      <label><input type="checkbox" />レイアウトの更新を保留する</label>
      <button disabled>更新</button>
    </PaneFoot>
  </Pane>
);

export default function App() {
  return (
    <Window>
      <GlobalStyle />
      <Title />
      <TabRow>
        {TABS.map(({ t, w, on, green }) => (
          <Tab key={t} $w={w} $on={on} $green={green}><span>{t}</span></Tab>
        ))}
        <Spacer />
        <ShareButton $w={55}>
          <svg width="12" height="12" viewBox="0 0 12 12" fill="none" stroke="#217346"><path d="M4 3.500H1V11H10V8M3.500 8Q4 4.500 8 4.500M7.500 1.500 11 4.500 7.500 7.500Z" /></svg>共有
        </ShareButton>
        <ShareButton $w={69}>
          <svg width="12" height="12" viewBox="0 0 12 12" fill="none" stroke="#217346"><path d="M.5 1.500H11.500V8.500H5L2.500 11V8.500H.5Z" /></svg>コメント
        </ShareButton>
      </TabRow>
      <RibbonView />
      <FormulaBar>
        <NameBox><input aria-label="名前ボックス" defaultValue="B5" /><Triangle size={6} /></NameBox>
        <Grip>⋮</Grip>
        <FormulaTools>
          <button aria-label="キャンセル"><svg width="11" height="11" viewBox="0 0 11 11" stroke="#b0b0b0" strokeWidth="1.500"><path d="M1 1 10 10M10 1 1 10" /></svg></button>
          <button aria-label="入力"><svg width="13" height="11" viewBox="0 0 13 11" fill="none" stroke="#b0b0b0" strokeWidth="2"><path d="M1 6 4.500 9.500 12 1" /></svg></button>
          <button aria-label="関数の挿入">
            <svg width="14" height="16" viewBox="0 0 14 16" fill="none" stroke="#444" strokeWidth="1.300"><path d="M9.500 2Q7 0 6 4L4 12Q3 15.500 1 14M3 6H8.500M7.500 8.500Q9 8 9.500 10Q10 13 12.500 12M12.500 8.500 7.500 12.500" /></svg>
          </button>
        </FormulaTools>
        <FormulaInput><input aria-label="数式バー" defaultValue="5333600" /><Chevron size={8} /></FormulaInput>
      </FormulaBar>
      <Main>
        <SheetSide>
          <SheetBody>
            <SheetViewport><Worksheet /></SheetViewport>
            <VScroll $w={17}>
              <ScrollButton aria-label="上へ"><Triangle dir="up" /></ScrollButton>
              <Thumb />
              <Track />
              <ScrollButton aria-label="下へ"><Triangle /></ScrollButton>
            </VScroll>
          </SheetBody>
          <TabBar>
            <SheetNav><Triangle dir="left" color="#217346" /><Triangle dir="right" color="#b5b5b5" /><span>...</span></SheetNav>
            <SheetTab $w={70} lang="ja">商品マスタ</SheetTab>
            <SheetTab $w={61} $on>Sheet8</SheetTab>
            <SheetTab $w={130} lang="ja">売り上げマージファイル</SheetTab>
            <SheetTab $w={61}>Sheet6</SheetTab>
            <SheetTab $w={61}>Sheet1</SheetTab>
            <AddSheet aria-label="新しいシート">
              <svg width="14" height="14" viewBox="0 0 14 14" fill="none" stroke="#777"><circle cx="7" cy="7" r="6.500" /><path d="M4 7H10M7 4V10" /></svg>
            </AddSheet>
            <Grip $w={23}>⋮</Grip>
            <HScroll>
              <ScrollButton aria-label="左へ"><Triangle dir="left" /></ScrollButton>
              <Thumb />
              <Track />
              <ScrollButton aria-label="右へ"><Triangle dir="right" /></ScrollButton>
            </HScroll>
          </TabBar>
        </SheetSide>
        <FieldPane />
      </Main>

      <Frame $x={107} $y={294} $w={413} $h={77} $r={14} />
      <Frame $x={649} $y={62} $w={58} $h={67} $r={11} />
      <Frame $x={652} $y={216} $w={188} $h={42} $r={9} />
      <Frame $x={839} $y={216} $w={160} $h={187} $r={34} />
      <Callout x={204} y={235} tail={[[64, 33], [-11, 57], [140, 33]]}>1.データバーを表示させたい範囲を選択</Callout>
      <Callout x={717} y={24} tail={[[62, 33], [-11, 56], [140, 33]]}>2.条件付き書式をクリック</Callout>
      <Callout x={810} y={152} tail={[[62, 33], [-11, 58], [140, 33]]}>3.データバーをクリック</Callout>
      <Callout x={677} y={433} tail={[[191, 2], [269, -27], [271, 2]]}>4.好きな表現をクリック</Callout>
    </Window>
  );
}
